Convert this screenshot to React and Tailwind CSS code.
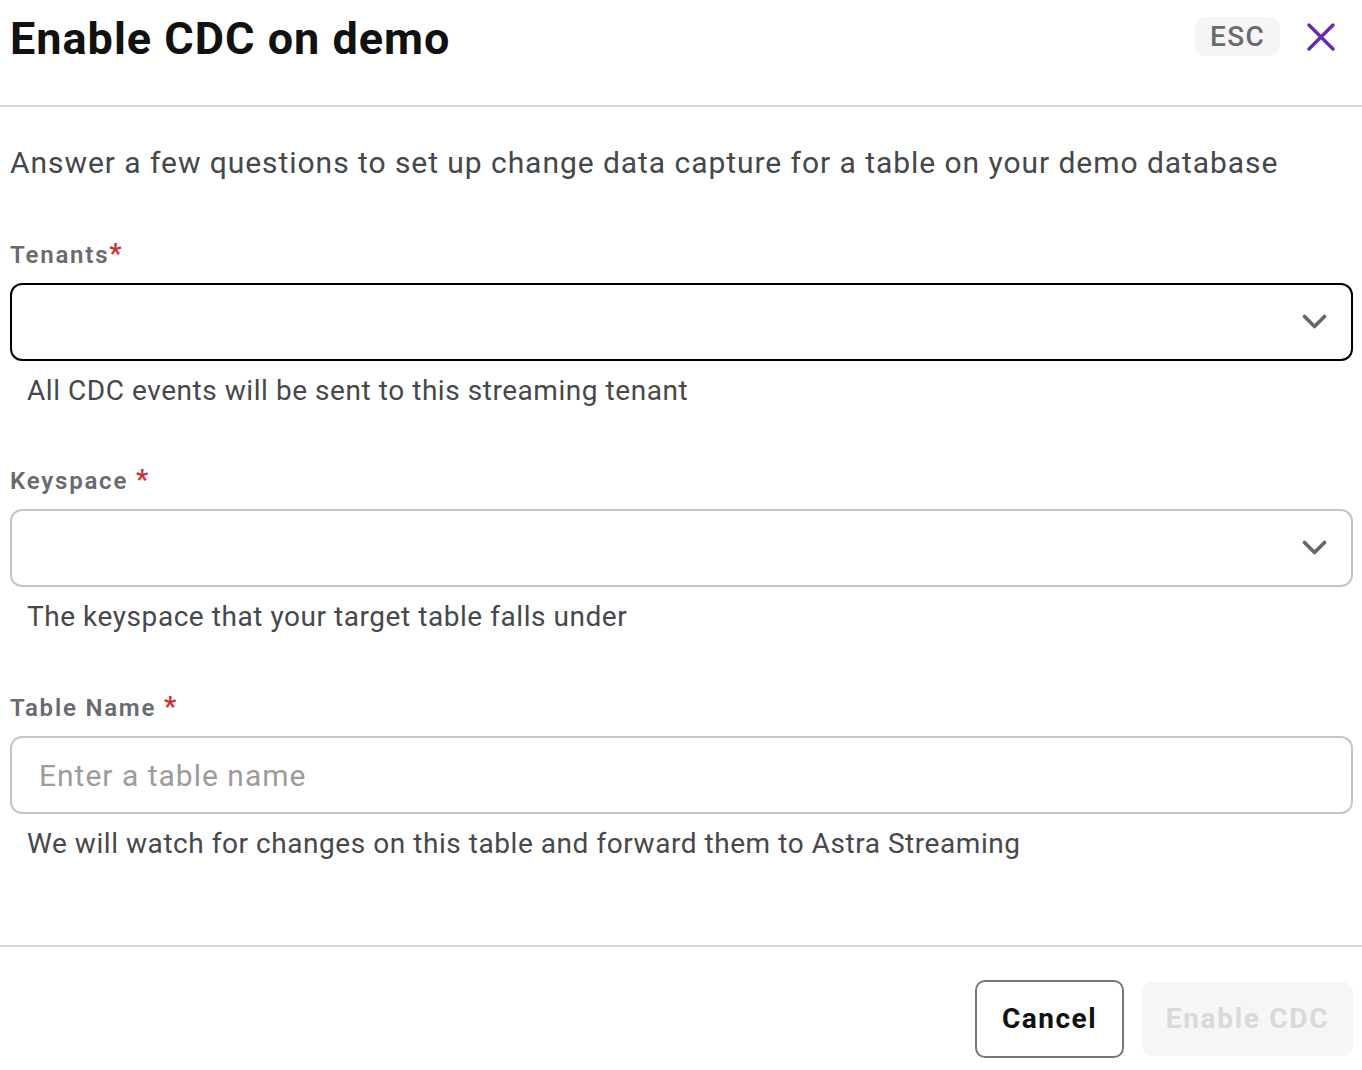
import { useState } from 'react';

function Chevron() {
  return (
    <svg width="25" height="16" viewBox="0 0 25 16" fill="none" className="shrink-0">
      <polyline points="2.5,2.5 12.5,12.5 22.5,2.5" stroke="#666666" strokeWidth="3.6" strokeLinecap="round" strokeLinejoin="round" />
    </svg>
  );
}

function Label({ text, spaced }) {
  return (
    <label className="block h-[30px] leading-[30px] text-[24px] font-semibold tracking-[1.8px] text-[#686b70]">
      {text}
      {spaced ? ' ' : ''}
      <span className="text-[27px] font-bold text-[#d32f2f]">*</span>
    </label>
  );
}

function Helper({ children }) {
  return (
    <p className="mt-[14px] pl-[17px] h-[32px] leading-[32px] text-[28px] tracking-[0.55px] text-[#46484c]">{children}</p>
  );
}

export default function App() {
  const [tableName, setTableName] = useState('');

  return (
    <div className="w-[1362px] h-[1070px] bg-white font-['Roboto',sans-serif] overflow-hidden">
      {/* Header */}
      <div className="h-[107px] border-b-2 border-[#d4d4d4] pl-[10px] pr-[27px] flex items-start justify-between">
        <h1 className="mt-[12px] text-[45px] leading-[53px] font-bold tracking-[1px] text-[#111111]">
          Enable CDC on demo
        </h1>
        <div className="flex items-center mt-[17px] gap-[27px]">
          <span className="h-[39px] w-[85px] rounded-[10px] bg-[#f5f5f5] text-[28px] font-medium tracking-[1.3px] text-[#6a6a6a] flex items-center justify-center">
            ESC
          </span>
          <button className="w-[28px] h-[28px] flex items-center justify-center">
            <svg width="28" height="28" viewBox="0 0 28 28" fill="none">
              <path d="M2 2 L26 26 M26 2 L2 26" stroke="#6a2aa8" strokeWidth="3.4" strokeLinecap="round" />
            </svg>
          </button>
        </div>
      </div>

      {/* Body */}
      <div className="pl-[10px] pr-[9px]">
        <p className="mt-[38px] h-[36px] leading-[36px] text-[30px] tracking-[0.95px] text-[#45474b]">
          Answer a few questions to set up change data capture for a table on your demo database
        </p>

        <div className="mt-[58px]">
          <Label text="Tenants" />
          <div className="mt-[14px] h-[78px] rounded-[12px] border-2 border-black flex items-center justify-end pr-[24px]">
            <Chevron />
          </div>
          <Helper>All CDC events will be sent to this streaming tenant</Helper>
        </div>

        <div className="mt-[58px]">
          <Label text="Keyspace" spaced />
          <div className="mt-[14px] h-[78px] rounded-[12px] border-2 border-[#c6c6c6] flex items-center justify-end pr-[24px]">
            <Chevron />
          </div>
          <Helper>The keyspace that your target table falls under</Helper>
        </div>

        <div className="mt-[59px]">
          <Label text="Table Name" spaced />
          <input
            value={tableName}
            onChange={(e) => setTableName(e.target.value)}
            placeholder="Enter a table name"
            className="mt-[14px] w-full h-[78px] rounded-[12px] border-2 border-[#c6c6c6] px-[27px] text-[30px] tracking-[1px] text-[#222] placeholder:text-[#9c9c9c] outline-none"
          />
          <Helper>We will watch for changes on this table and forward them to Astra Streaming</Helper>
        </div>
      </div>

      {/* Footer */}
      <div className="mt-[85px] border-t-2 border-[#d4d4d4] pr-[9px] flex justify-end items-center gap-[18px] pt-[33px]">
        <button className="h-[78px] w-[149px] rounded-[10px] border-2 border-[#777777] bg-white text-[28px] font-bold tracking-[1.5px] text-[#111111]">
          Cancel
        </button>
        <button disabled className="h-[74px] w-[211px] rounded-[10px] bg-[#f6f6f6] text-[28px] font-bold tracking-[1.7px] text-[#d9d9d9]">
          Enable CDC
        </button>
      </div>
    </div>
  );
}
